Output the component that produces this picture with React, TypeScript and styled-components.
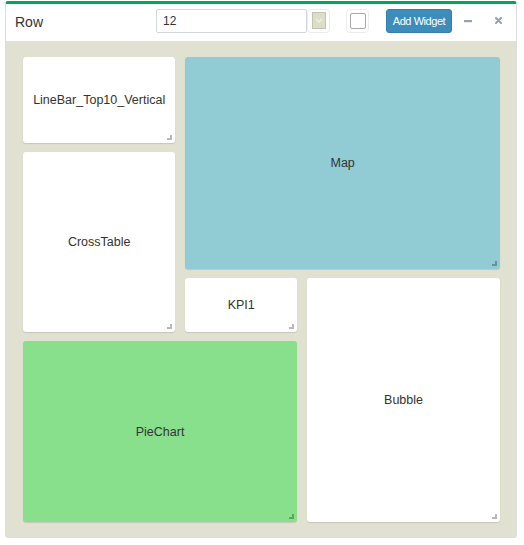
import React from "react";
import styled, { createGlobalStyle } from "styled-components";

const Global = createGlobalStyle`
  html, body { margin: 0; padding: 0; background: #ffffff; }
  body { font-family: "Liberation Sans", Arial, Helvetica, sans-serif; color: #333; }
  * { box-sizing: border-box; }
`;

const Panel = styled.div`
  margin: 1px 0 0 5px;
  width: 512px;
  border-top: 3px solid #00a65a;
  border-left: 1px solid #dcdcdc;
  border-right: 1px solid #dcdcdc;
  border-bottom: 1px solid #dcdcdc;
  border-radius: 3px;
  background: #fff;
`;

const Header = styled.div`
  height: 37px;
  display: flex;
  align-items: center;
  padding: 0 0 4px 9px;
`;

const Title = styled.div`
  flex: 0 0 141px;
  font-size: 14px;
  color: #333;
  padding-top: 3px;
`;

const TextInput = styled.div`
  width: 151px;
  height: 24px;
  border: 1px solid #d2d6de;
  border-radius: 2px;
  padding: 0 6px;
  display: flex;
  align-items: center;
  font-size: 12px;
  color: #333;
`;

const ToolFrame = styled.div<{ $gap: number }>`
  margin-left: ${(p) => p.$gap}px;
  width: 23px;
  height: 24px;
  border: 1px solid #ececec;
  border-radius: 4px;
  display: flex;
  align-items: center;
  justify-content: center;
`;

const SelectBox = styled.div`
  width: 14px;
  height: 17px;
  background: #dcdec8;
  border: 1px solid #c2c4b2;
  display: flex;
  align-items: center;
  justify-content: center;
`;

const CheckBox = styled.div`
  width: 16px;
  height: 16px;
  border: 1px solid #a8a8a8;
  border-radius: 2px;
  background: #fff;
`;

const AddButton = styled.button`
  margin-left: 17px;
  width: 66px;
  height: 24px;
  background: #3c8dbc;
  border: 1px solid #367fa9;
  border-radius: 3px;
  color: #fff;
  font-family: "Liberation Sans", Arial, sans-serif;
  font-size: 11px;
  letter-spacing: -0.45px;
  padding: 0;
  display: flex;
  align-items: center;
  justify-content: center;
`;

const ToolIcon = styled.div<{ $gap: number }>`
  margin-left: ${(p) => p.$gap}px;
  display: flex;
  align-items: center;
  justify-content: center;
  color: #97a0b3;
`;

const Body = styled.div`
  background: #e0e1d0;
  padding: 16px 16px 15px 17px;
`;

const Grid = styled.div`
  display: grid;
  height: 465px;
  grid-template-columns: repeat(12, 1fr);
  grid-template-rows: repeat(15, 1fr);
  column-gap: 10px;
  row-gap: 9px;
`;

const Card = styled.div<{ $x: number; $y: number; $w: number; $h: number; $bg: string }>`
  position: relative;
  grid-column: ${(p) => p.$x + 1} / span ${(p) => p.$w};
  grid-row: ${(p) => p.$y + 1} / span ${(p) => p.$h};
  background: ${(p) => p.$bg};
  border-radius: 3px;
  box-shadow: 0 1px 1px rgba(0, 0, 0, 0.12);
  display: flex;
  align-items: center;
  justify-content: center;
  font-size: 12.5px;
  color: #333;
`;

const Handle = styled.span`
  position: absolute;
  right: 3px;
  bottom: 3px;
  width: 5px;
  height: 5px;
  border-right: 2px solid rgba(0, 0, 0, 0.28);
  border-bottom: 2px solid rgba(0, 0, 0, 0.28);
`;

type W = { name: string; x: number; y: number; w: number; h: number; bg: string };

const widgets: W[] = [
  { name: "LineBar_Top10_Vertical", x: 0, y: 0, w: 4, h: 3, bg: "#ffffff" },
  { name: "Map", x: 4, y: 0, w: 8, h: 7, bg: "#91cbd4" },
  { name: "CrossTable", x: 0, y: 3, w: 4, h: 6, bg: "#ffffff" },
  { name: "KPI1", x: 4, y: 7, w: 3, h: 2, bg: "#ffffff" },
  { name: "Bubble", x: 7, y: 7, w: 5, h: 8, bg: "#ffffff" },
  { name: "PieChart", x: 0, y: 9, w: 7, h: 6, bg: "#88e08c" },
];

export default function App() {
  return (
    <>
      <Global />
      <Panel>
        <Header>
          <Title>Row</Title>
          <TextInput>12</TextInput>
          <ToolFrame $gap={0}>
            <SelectBox>
              <svg width="8" height="5" viewBox="0 0 8 5">
                <path d="M1 1 L4 4 L7 1" fill="none" stroke="#f2f2ea" strokeWidth="1.2" />
              </svg>
            </SelectBox>
          </ToolFrame>
          <ToolFrame $gap={16}>
            <CheckBox />
          </ToolFrame>
          <AddButton>Add Widget</AddButton>
          <ToolIcon $gap={12}>
            <svg width="8" height="8" viewBox="0 0 8 8">
              <rect x="0" y="3" width="8" height="2.2" fill="#97a0b3" />
            </svg>
          </ToolIcon>
          <ToolIcon $gap={23}>
            <svg width="7" height="7" viewBox="0 0 7 7">
              <path d="M1 1 L6 6 M6 1 L1 6" stroke="#97a0b3" strokeWidth="2" strokeLinecap="round" />
            </svg>
          </ToolIcon>
        </Header>
        <Body>
          <Grid>
            {widgets.map((w) => (
              <Card key={w.name} $x={w.x} $y={w.y} $w={w.w} $h={w.h} $bg={w.bg}>
                {w.name}
                <Handle />
              </Card>
            ))}
          </Grid>
        </Body>
      </Panel>
    </>
  );
}
